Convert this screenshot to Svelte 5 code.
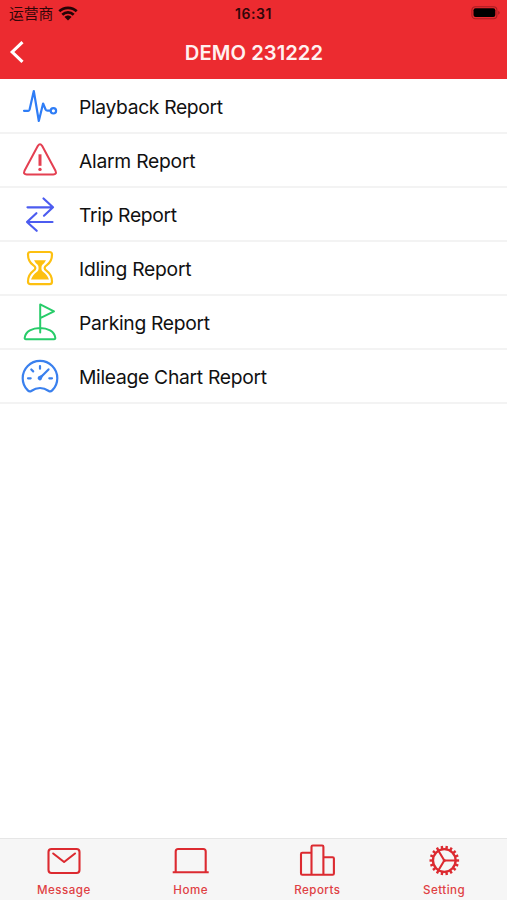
<script>
  const reports = [
    { icon: 'playback', label: 'Playback Report', color: '#2f7df6', width: 144 },
    { icon: 'alarm', label: 'Alarm Report', color: '#e43f51', width: 116.5 },
    { icon: 'trip', label: 'Trip Report', color: '#4c5cf0', width: 98 },
    { icon: 'idling', label: 'Idling Report', color: '#fdc010', width: 112.5 },
    { icon: 'parking', label: 'Parking Report', color: '#27cc69', width: 131 },
    { icon: 'mileage', label: 'Mileage Chart Report', color: '#3a80ee', width: 188 }
  ];
  const tabs = ['Message', 'Home', 'Reports', 'Setting'];
  const teeth = Array.from({ length: 18 }, (_, i) => i * 20 + 10);
</script>

<div class="screen">
  <header>
    <div class="status">
      <div class="carrier">
        <span>运营商</span>
        <svg width="20" height="15" viewBox="0 0 20 15" fill="none" stroke="#240406" stroke-width="2.7">
          <path d="M1.3 5.3C6 .7 14 .7 18.7 5.3M4.3 8.700C7.5 5.600 12.500 5.600 15.700 8.700" />
          <path d="M6.500 11c1.900-2 5.100-2 7 0L10 14.500z" fill="#240406" stroke="none" />
        </svg>
      </div>
      <span class="clock">16:31</span>
      <svg class="battery" width="30" height="14" viewBox="0 0 30 14">
        <rect x=".9" y=".7" width="25" height="12" rx="3.5" fill="none" stroke="#a81d22" stroke-width="1.1" />
        <rect x="2.5" y="2.3" width="21.8" height="8.8" rx="2" fill="#000" />
        <path d="M27.4 4.7q2.4 2 0 4z" fill="#8f1a1e" />
      </svg>
    </div>
    <div class="nav">
      <svg width="18" height="26" viewBox="0 0 18 26" fill="none" stroke="#fff" stroke-width="3.1">
        <path d="M14.500 3.200 4.200 13l10.300 9.800" />
      </svg>
      <h1>DEMO 231222</h1>
      <span></span>
    </div>
  </header>

  <main>
    {#each reports as r}
      <div class="row">
        <svg class="icon" width="40" height="40" viewBox="0 0 40 40" fill="none" stroke={r.color} stroke-width="2.2" stroke-linecap="round" stroke-linejoin="round">
          {#if r.icon === 'playback'}
            <path d="M4 24.8h4.3q1 0 1.3-1.200L13.800 5l5 30 4.300-17.500 2.500 6q.6 1.200 2 1.200h2.700" />
            <circle cx="33.400" cy="24.800" r="2.700" />
          {:else if r.icon === 'alarm'}
            <path d="M17.900 5.800q2.100-2.900 4.200 0l13.400 25q1.500 3.500-2.200 3.700H6.700q-3.700-.2-2.200-3.700z" stroke-width="2" />
            <path d="M20 14.300v11.500" stroke-width="3" stroke-linecap="butt" />
            <circle cx="20" cy="29.400" r="1.700" fill={r.color} stroke="none" />
          {:else if r.icon === 'trip'}
            <path d="M7.500 13.300H33M23.500 4.500l9.500 8.800-9 8.400M32.500 28H7M16.400 19.200 7 28l9.700 8.800" />
          {:else if r.icon === 'idling'}
            <path d="M10.500 4h19q2.500 0 2.500 2.500 0 7-5.200 10.600-4.300 2.900-.1 5.800Q32 26.700 32 33.700q0 2.500-2.500 2.500h-19Q8 36.200 8 33.700q0-7 5.300-10.800 4.200-2.900-.1-5.800Q8 13.500 8 6.500 8 4 10.500 4z" />
            <path d="M14 12.300h12q-1.200 2.600-3.600 4.500-1 .9-1 3.400 0 2.200 1.300 3.200 4.800 3.600 6.300 8.100H11q1.500-4.500 6.300-8.100 1.300-1 1.300-3.200 0-2.500-1-3.400-2.400-1.900-3.600-4.500z" fill={r.color} stroke="none" />
          {:else if r.icon === 'parking'}
            <path d="M20.200 30.500V2.400L34 9.300l-13.800 6.900M6 37.300q-1.500 0-1.300-1.500C6.200 22.700 33.800 22.700 35.300 35.800q.2 1.500-1.300 1.500z" stroke-width="2" />
          {:else}
            <path d="M7.800 34.400A17.300 17.300 0 1 1 32.200 34.400q-1.700 1.700-3.400.6-8.800-6-17.600 0-1.700 1.100-3.400-.6z" />
            <path d="M8 22.300h2.700M29.300 22.300H32M11.300 13.500l1.900 1.900M20 10v2.700" />
            <path d="m20.500 21.500 8-8.100" />
            <path d="m18.200 20.600 5.400-2.500-2 5.400a2 2 0 1 1-3.400-2.900z" fill={r.color} stroke="none" />
          {/if}
        </svg>
        <svg class="label" width="240" height="30" role="img" aria-label={r.label}>
          <text x="0" y="22" textLength={r.width} lengthAdjust="spacing">{r.label}</text>
        </svg>
      </div>
    {/each}
  </main>

  <footer>
    {#each tabs as tab}
      <div class="tab">
        <svg width="40" height="36" viewBox="0 0 40 36" fill="none" stroke="#dc2a30" stroke-width="2.100" stroke-linejoin="round">
          {#if tab === 'Message'}
            <rect x="5.500" y="6" width="31" height="24" rx="3" />
            <path d="m10.200 10.500 10.900 8.500L32 10.500" stroke-linecap="round" />
          {:else if tab === 'Home'}
            <path d="M5.700 28.500V8.500q0-2.500 2.500-2.500h25q2.500 0 2.500 2.500v20M2.700 29.300h36" />
          {:else if tab === 'Reports'}
            <path d="M14.500 9.700H5.300Q4 9.700 4 11v19.500q0 1.300 1.300 1.300h30.300q1.300 0 1.300-1.300V15.500q0-1.300-1.300-1.300h-9.200M14.500 31.800v-28q0-1.300 1.300-1.300h9.300q1.300 0 1.300 1.300v28" />
          {:else}
            <circle cx="20.300" cy="17.500" r="11.300" stroke-width="2.300" />
            {#each teeth as a}
              <path d="M20.300 6V2.700" transform="rotate({a} 20.300 17.500)" stroke-width="2.400" />
            {/each}
            <path d="M20.300 17.500h11.500M20.300 17.500l-6-10M20.300 17.500l-6 10" />
            <circle cx="20.300" cy="17.500" r="1.500" fill="#dc2a30" stroke="none" />
          {/if}
        </svg>
        <span>{tab}</span>
      </div>
    {/each}
  </footer>
</div>

<style>
  .screen {
    width: 507px;
    height: 900px;
    display: flex;
    flex-direction: column;
    overflow: hidden;
    background: #fff;
    font-family: Inter, "Noto Sans CJK SC", sans-serif;
  }
  header {
    height: 79px;
    flex: none;
    background: #ec2b30;
  }
  .status {
    height: 27px;
    display: grid;
    grid-template-columns: 1fr auto 1fr;
    align-items: center;
    color: #310609;
  }
  .carrier {
    display: flex;
    align-items: center;
    gap: 5px;
    padding-left: 9px;
    font: 14.800px/20px "Noto Sans CJK SC", sans-serif;
  }
  .carrier span { margin-top: -1px; }
  .carrier svg { margin-top: -1px; }
  .clock {
    font-size: 14px;
    font-weight: 600;
    letter-spacing: .6px;
  }
  .battery {
    justify-self: end;
    margin-right: 6px;
    margin-top: -1px;
  }
  .nav {
    height: 50px;
    display: grid;
    grid-template-columns: 1fr auto 1fr;
    align-items: center;
    padding: 0 7px 0 8px;
  }
  h1 {
    margin: 1px 0 0;
    color: #fff1f0;
    font-size: 20.200px;
    font-weight: 600;
    line-height: 26px;
    letter-spacing: .05px;
  }
  main {
    flex: 1;
    padding-top: .5px;
  }
  .row {
    height: 54.170px;
    box-sizing: border-box;
    display: flex;
    align-items: center;
    padding-left: 20px;
    border-bottom: 2px solid #f3f3f3;
  }
  .icon { flex: none; }
  .label {
    margin: 2px 0 0 19px;
    overflow: visible;
    font-size: 19.300px;
    fill: #111;
  }
  footer {
    height: 62px;
    box-sizing: border-box;
    flex: none;
    display: grid;
    grid-template-columns: repeat(4, 1fr);
    border-top: 1px solid #e6e6e6;
    background: #f6f6f6;
  }
  .tab {
    display: flex;
    flex-direction: column;
    align-items: center;
    padding-top: 4px;
    color: #df4043;
    font-size: 11.600px;
    font-weight: 500;
    letter-spacing: .45px;
    line-height: 22px;
  }
  .tab span { padding-left: 1px; }
</style>
